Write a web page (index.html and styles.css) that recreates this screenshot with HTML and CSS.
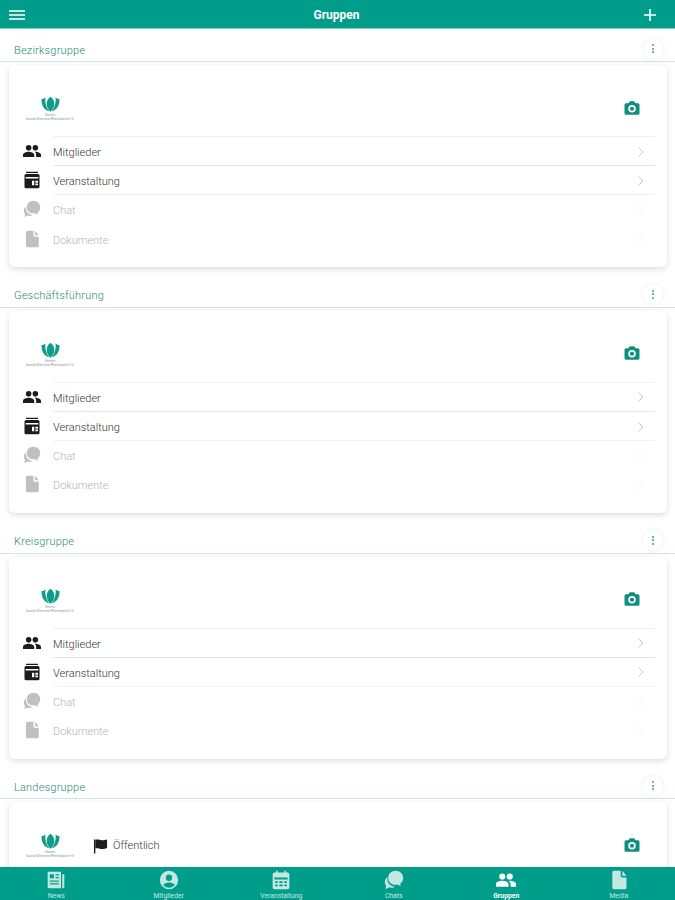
FILE: index.html
```html
<!DOCTYPE html>
<html lang="de">
<head>
    <meta charset="UTF-8">
    <meta name="viewport" content="width=device-width, initial-scale=1">
    <title>Gruppen</title>
    <link rel="stylesheet" href="styles.css">
</head>
<body>

    <!-- Icons used more than once -->
    <svg class="sprite" aria-hidden="true">
        <symbol id="i-people" viewBox="0 0 24 24"><path d="M16.500 11.500a3.700 3.700 0 1 0 0-7.400 3.700 3.700 0 0 0 0 7.400zm-9 0a3.700 3.700 0 1 0 0-7.400 3.700 3.700 0 0 0 0 7.400zm0 1.500C4.800 13 0 14.300 0 17v3h15v-3c0-2.700-4.800-4-7.500-4zm9 0c-.4 0-.7 0-1.100.100 1.300.9 2.100 2.200 2.100 3.900v3H24v-3c0-2.700-4.800-4-7.500-4z"/></symbol>
        <symbol id="i-event" viewBox="0 0 24 24"><path fill-rule="evenodd" d="M4 1h16v1.500H4zM4 4h16a2 2 0 0 1 2 2v15a2 2 0 0 1-2 2H4a2 2 0 0 1-2-2V6a2 2 0 0 1 2-2zm-.500 4v2h17V8zM12 13v6h3v-6zm4.500 0v2.500H20V13zm0 3.500V19H20v-2.500z"/></symbol>
        <symbol id="i-chat" viewBox="0 0 24 24"><path d="M14 1c5 0 9 3.700 9 8.500 0 3-1.400 5.300-3.500 6.800l.5 3.200-3.800-2c-.7.200-1.400.3-2.200.3-5 0-9-3.600-9-8.300S9 1 14 1z"/><path d="M4 8.500C2 10 1 12 1 14.300c0 1.700.6 3.200 1.600 4.400L2 23l4.200-2.200c1.100.4 2.300.6 3.500.5 1.300-.1 2.600-.5 3.600-1.200C8.400 19.700 4 16 4 11z"/></symbol>
        <symbol id="i-doc" viewBox="0 0 24 24"><path d="M6 1h8v6a2 2 0 0 0 2 2h5v12a2 2 0 0 1-2 2H6a2 2 0 0 1-2-2V3a2 2 0 0 1 2-2zm10 0 5 6h-5z"/></symbol>
        <symbol id="i-camera" viewBox="0 0 24 24"><path fill-rule="evenodd" d="M9 3 7.200 5.500H4a2 2 0 0 0-2 2V19a2 2 0 0 0 2 2h16a2 2 0 0 0 2-2V7.500a2 2 0 0 0-2-2h-3.200L15 3zm3 5a5 5 0 1 1 0 10 5 5 0 0 1 0-10zm0 2.200a2.800 2.800 0 1 0 0 5.600 2.800 2.800 0 0 0 0-5.600z"/></symbol>
        <symbol id="i-chevron" viewBox="0 0 9 12"><path d="M2.500 1.500l4.500 4.500-4.500 4.500" fill="none" stroke="currentColor" stroke-width="1"/></symbol>
        <symbol id="i-logo" viewBox="0 0 24 20"><path d="M12 1c3 2 4.500 5 4.500 8.500 0 3.500-2 7-4.500 9-2.500-2-4.500-5.500-4.500-9C7.500 6 9 3 12 1z"/><path d="M6 1.500c-.5 5 .5 11.500 4.500 16.500C5 16.500 1 11.500 1.500 3.500c1.500.3 3.200-.3 4.500-2zM18 1.500c.5 5-.5 11.500-4.500 16.500 5.500-1.500 9.500-6.500 9-14.500-1.500.3-3.200-.3-4.500-2z"/></symbol>
    </svg>

    <div class="app">
        <header class="topbar">
            <svg class="menu-icon" viewBox="0 0 16 10"><path d="M0 1h16M0 5h16M0 9h16" stroke="currentColor" stroke-width="1.500"/></svg>
            <h1>Gruppen</h1>
            <svg class="plus-icon" viewBox="0 0 12 12"><path d="M6 0v12M0 6h12" stroke="currentColor" stroke-width="1.600"/></svg>
        </header>

        <main class="groups">

            <!-- Bezirksgruppe -->
            <section class="group">
                <div class="group-head">
                    <span class="group-name">Bezirksgruppe</span>
                    <button class="more"><i></i><i></i><i></i></button>
                </div>
                <div class="card">
                    <div class="card-top">
                        <div class="logo">
                            <svg><use href="#i-logo"/></svg>
                            <span>Verein</span>
                            <span>Sozial-Dienste Rheinland e.V.</span>
                        </div>
                        <svg class="camera"><use href="#i-camera"/></svg>
                    </div>
                    <a class="row"><svg class="row-icon"><use href="#i-people"/></svg><span>Mitglieder</span><svg class="chevron"><use href="#i-chevron"/></svg></a>
                    <a class="row"><svg class="row-icon"><use href="#i-event"/></svg><span>Veranstaltung</span><svg class="chevron"><use href="#i-chevron"/></svg></a>
                    <a class="row off"><svg class="row-icon"><use href="#i-chat"/></svg><span>Chat</span><svg class="chevron"><use href="#i-chevron"/></svg></a>
                    <a class="row off"><svg class="row-icon"><use href="#i-doc"/></svg><span>Dokumente</span><svg class="chevron"><use href="#i-chevron"/></svg></a>
                </div>
            </section>

            <!-- Geschäftsführung -->
            <section class="group">
                <div class="group-head">
                    <span class="group-name">Geschäftsführung</span>
                    <button class="more"><i></i><i></i><i></i></button>
                </div>
                <div class="card">
                    <div class="card-top">
                        <div class="logo">
                            <svg><use href="#i-logo"/></svg>
                            <span>Verein</span>
                            <span>Sozial-Dienste Rheinland e.V.</span>
                        </div>
                        <svg class="camera"><use href="#i-camera"/></svg>
                    </div>
                    <a class="row"><svg class="row-icon"><use href="#i-people"/></svg><span>Mitglieder</span><svg class="chevron"><use href="#i-chevron"/></svg></a>
                    <a class="row"><svg class="row-icon"><use href="#i-event"/></svg><span>Veranstaltung</span><svg class="chevron"><use href="#i-chevron"/></svg></a>
                    <a class="row off"><svg class="row-icon"><use href="#i-chat"/></svg><span>Chat</span><svg class="chevron"><use href="#i-chevron"/></svg></a>
                    <a class="row off"><svg class="row-icon"><use href="#i-doc"/></svg><span>Dokumente</span><svg class="chevron"><use href="#i-chevron"/></svg></a>
                </div>
            </section>

            <!-- Kreisgruppe -->
            <section class="group">
                <div class="group-head">
                    <span class="group-name">Kreisgruppe</span>
                    <button class="more"><i></i><i></i><i></i></button>
                </div>
                <div class="card">
                    <div class="card-top">
                        <div class="logo">
                            <svg><use href="#i-logo"/></svg>
                            <span>Verein</span>
                            <span>Sozial-Dienste Rheinland e.V.</span>
                        </div>
                        <svg class="camera"><use href="#i-camera"/></svg>
                    </div>
                    <a class="row"><svg class="row-icon"><use href="#i-people"/></svg><span>Mitglieder</span><svg class="chevron"><use href="#i-chevron"/></svg></a>
                    <a class="row"><svg class="row-icon"><use href="#i-event"/></svg><span>Veranstaltung</span><svg class="chevron"><use href="#i-chevron"/></svg></a>
                    <a class="row off"><svg class="row-icon"><use href="#i-chat"/></svg><span>Chat</span><svg class="chevron"><use href="#i-chevron"/></svg></a>
                    <a class="row off"><svg class="row-icon"><use href="#i-doc"/></svg><span>Dokumente</span><svg class="chevron"><use href="#i-chevron"/></svg></a>
                </div>
            </section>

            <!-- Landesgruppe -->
            <section class="group">
                <div class="group-head">
                    <span class="group-name">Landesgruppe</span>
                    <button class="more"><i></i><i></i><i></i></button>
                </div>
                <div class="card">
                    <div class="card-top">
                        <div class="logo">
                            <svg><use href="#i-logo"/></svg>
                            <span>Verein</span>
                            <span>Sozial-Dienste Rheinland e.V.</span>
                        </div>
                        <div class="visibility">
                            <svg viewBox="0 0 16 16"><path d="M1 1h1.500v15H1z"/><path d="M2.500 1.500c3-1 5 .8 8 .4 1.500-.2 3-.5 4.500-.9v9c-1.500.6-3 1-4.500 1.100-3 .2-5-1.300-8-.6z"/></svg>
                            <span>Öffentlich</span>
                        </div>
                        <svg class="camera"><use href="#i-camera"/></svg>
                    </div>
                </div>
            </section>

        </main>

        <nav class="tabs">
            <a class="tab">
                <svg viewBox="0 0 24 24"><path fill-rule="evenodd" d="M2 2h16v20H4a2 2 0 0 1-2-2zm2.500 3v5h5V5zm7 0v1.500h4V5zm0 3.500V10h4V8.500zm-7 4V14h11v-1.500zm0 3.500v1.500h11V16zM19.500 5H22v15a2 2 0 0 1-2 2h-.500z"/></svg>
                <span>News</span>
            </a>
            <a class="tab">
                <svg viewBox="0 0 24 24"><path d="M12 1a11 11 0 1 0 0 22 11 11 0 0 0 0-22zm0 4.500a3.800 3.800 0 1 1 0 7.600 3.800 3.800 0 0 1 0-7.600zm0 15.700a9 9 0 0 1-7-3.300c.9-1.900 4.300-3 7-3s6.100 1.100 7 3a9 9 0 0 1-7 3.300z"/></svg>
                <span>Mitglieder</span>
            </a>
            <a class="tab">
                <svg viewBox="0 0 24 24"><path fill-rule="evenodd" d="M6 1h2v2h8V1h2v2h2a2 2 0 0 1 2 2v16a2 2 0 0 1-2 2H4a2 2 0 0 1-2-2V5a2 2 0 0 1 2-2h2zM4 9v2.500h16V9zm1 4.500v2h3v-2zm5 0v2h4v-2zm6 0v2h3v-2zM5 17.500v2h3v-2zm5 0v2h4v-2zm6 0v2h3v-2z"/></svg>
                <span>Veranstaltung</span>
            </a>
            <a class="tab">
                <svg><use href="#i-chat"/></svg>
                <span>Chats</span>
            </a>
            <a class="tab active">
                <svg><use href="#i-people"/></svg>
                <span>Gruppen</span>
            </a>
            <a class="tab">
                <svg><use href="#i-doc"/></svg>
                <span>Media</span>
            </a>
        </nav>
    </div>

</body>
</html>
```

FILE: styles.css
```css
* {
    margin: 0;
    padding: 0;
    box-sizing: border-box;
}
body {
    font-family: 'Roboto', sans-serif;
    background: #fff;
}
.sprite {
    display: none;
}
.app {
    height: 900px;
    display: flex;
    flex-direction: column;
    overflow: hidden;
}

/* top bar */
.topbar {
    height: 29px;
    flex: none;
    display: flex;
    align-items: center;
    justify-content: space-between;
    padding: 1px 19px 0 9px;
    background: #009e8a;
    border-bottom: 1px solid #7fcfc4;
    color: #fff;
}
.topbar h1 {
    margin-left: 4px;
    font-size: 12px;
    font-weight: 700;
}
.menu-icon {
    width: 16px;
    height: 10px;
}
.plus-icon {
    width: 12px;
    height: 12px;
}

/* group list */
.groups {
    flex: 1;
    overflow: hidden;
}
.group {
    height: 245.830px;
}
.group-head {
    height: 33px;
    display: flex;
    align-items: center;
    justify-content: space-between;
    padding: 10px 12px 0 14px;
    border-bottom: 1px solid #cfe7e3;
}
.group-name {
    font-size: 11px;
    font-weight: 300;
    letter-spacing: 0.200px;
    color: #1f8a78;
}
.more {
    width: 20px;
    height: 20px;
    display: flex;
    flex-direction: column;
    align-items: center;
    justify-content: center;
    gap: 1.500px;
    margin-top: -3px;
    border: none;
    border-radius: 50%;
    background: #fff;
    box-shadow: 0 0 5px rgba(0, 0, 0, 0.08);
}
.more i {
    width: 2px;
    height: 2px;
    border-radius: 50%;
    background: #3f9c8c;
}
.card {
    height: 202px;
    margin: 3px 8px 0 9px;
    padding: 0 12px 0 14px;
    background: #fff;
    border-radius: 6px;
    box-shadow: 0 2px 6px rgba(0, 0, 0, 0.14);
}
.card-top {
    height: 71px;
    display: flex;
    align-items: center;
    padding-top: 16px;
}
.logo {
    width: 54px;
    display: flex;
    flex-direction: column;
    align-items: center;
    color: #8a9a98;
    font-size: 3.800px;
    line-height: 4px;
    white-space: nowrap;
}
.logo svg {
    width: 21px;
    height: 17px;
    fill: #0f9c88;
}
.camera {
    width: 18px;
    height: 18px;
    margin-left: auto;
    margin-right: 14px;
    margin-top: -2px;
    fill: #0f8f7d;
}
.visibility {
    display: flex;
    align-items: center;
    gap: 5px;
    margin-left: 16px;
    font-size: 11px;
    font-weight: 300;
    color: #333;
}
.visibility svg {
    width: 15px;
    height: 16px;
    fill: #1c1c1c;
}
.row {
    height: 29.200px;
    display: flex;
    align-items: center;
    font-size: 11px;
    font-weight: 300;
    color: #333;
}
.row span {
    flex: 1;
    align-self: stretch;
    display: flex;
    align-items: center;
    margin-left: 12px;
    padding-top: 3px;
    border-top: 1px solid #e4e4e4;
}
.row-icon {
    width: 18px;
    height: 18px;
    margin-top: 1px;
    fill: #1c1c1c;
}
.row .chevron {
    width: 9px;
    height: 12px;
    margin-top: 2px;
    margin-left: -19.500px;
    margin-right: 10.500px;
    color: #c8c8c8;
}
.card-top + .row span {
    border-top: 1px solid #f0f0f0;
}
.row.off {
    color: #b4b4b4;
}
.row.off .row-icon {
    fill: #c0c0c0;
}
.row.off .chevron {
    color: #f2f2f2;
}
.row.off span {
    border-top-color: #f2f2f2;
}
.row.off + .row.off span {
    border-top-color: transparent;
}

/* bottom tabs */
.tabs {
    height: 33px;
    flex: none;
    display: grid;
    grid-template-columns: repeat(6, 1fr);
    background: #009e8a;
}
.tab {
    display: flex;
    flex-direction: column;
    align-items: center;
    padding-top: 3px;
    color: #c5e7e2;
    font-size: 6.800px;
    line-height: 8px;
}
.tab svg {
    width: 20px;
    height: 20px;
    margin-bottom: 2px;
    fill: #c5e7e2;
}
.tab.active {
    color: #fff;
    font-weight: 700;
}
.tab.active svg {
    fill: #fff;
}
```
